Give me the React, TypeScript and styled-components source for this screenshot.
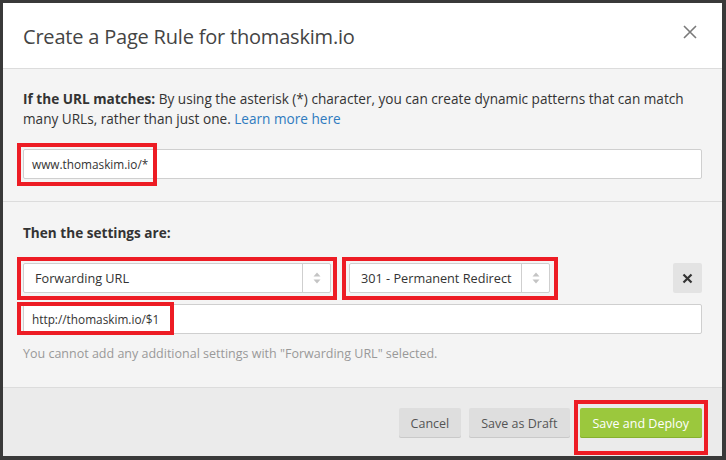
import React from "react";
import styled, { createGlobalStyle } from "styled-components";

const GlobalStyle = createGlobalStyle`
  html, body {
    margin: 0;
    padding: 0;
    background: #393939;
  }
  body {
    font-family: "Open Sans", "Liberation Sans", Arial, sans-serif;
    color: #333;
  }
  * {
    box-sizing: border-box;
  }
`;

const Page = styled.div`
  width: 726px;
  height: 460px;
  padding: 3px 4px 4px 3px;
  background: #393939;
`;

const Dialog = styled.div`
  width: 719px;
  height: 453px;
  display: flex;
  flex-direction: column;
  background: #f4f4f4;
  overflow: hidden;
`;

const Header = styled.div`
  height: 66px;
  flex: none;
  display: flex;
  align-items: center;
  justify-content: space-between;
  padding: 2px 24px 0 20px;
  background: #fff;
  border-bottom: 1px solid #dcdcdc;
`;

const Title = styled.h2`
  margin: 0;
  font-size: 20px;
  font-weight: 400;
  color: #444;
  letter-spacing: -0.2px;
`;

const CloseButton = styled.button`
  width: 14px;
  height: 14px;
  padding: 0;
  border: 0;
  background: none;
  display: flex;
  margin-top: -9px;
  margin-right: 1px;
  cursor: pointer;
`;

const Section = styled.div<{ $last?: boolean }>`
  padding: ${({ $last }) => ($last ? "21px 20px 24px" : "20px 20px 22px")};
  border-bottom: 1px solid #dcdcdc;
`;

const Text = styled.p`
  margin: 0 0 20px;
  font-size: 13.6px;
  line-height: 20px;
  color: #333;

  b {
    font-weight: 700;
  }

  a {
    color: #2f7bbf;
    text-decoration: none;
  }
`;

const Field = styled.div`
  position: relative;
`;

const Input = styled.div`
  height: 30px;
  display: flex;
  align-items: center;
  padding: 0 8px;
  background: #fff;
  border: 1px solid #cfcfcf;
  border-radius: 2px;
  font-size: 11.8px;
  color: #333;
`;

const Highlight = styled.span<{ $l: number; $t: number; $w: number; $h: number }>`
  position: absolute;
  left: ${({ $l }) => $l}px;
  top: ${({ $t }) => $t}px;
  width: ${({ $w }) => $w}px;
  height: ${({ $h }) => $h}px;
  border: 4px solid #ed1c24;
  pointer-events: none;
`;

const Row = styled.div`
  display: flex;
  align-items: center;
  margin-bottom: 11px;
`;

const Select = styled.div<{ $width: number; $gap?: number }>`
  position: relative;
  width: ${({ $width }) => $width}px;
  height: 30px;
  margin-right: ${({ $gap }) => $gap || 0}px;
  display: flex;
  background: #fff;
  border: 1px solid #cfcfcf;
  border-radius: 2px;
`;

const SelectLabel = styled.div`
  flex: 1;
  display: flex;
  align-items: center;
  padding-left: 11px;
  font-size: 12.7px;
  color: #333;
`;

const Arrows = styled.div`
  width: 28px;
  display: flex;
  align-items: center;
  justify-content: center;
  border-left: 1px solid #cfcfcf;
`;

const RemoveButton = styled.button`
  margin-left: auto;
  width: 29px;
  height: 30px;
  padding: 0;
  display: flex;
  align-items: center;
  justify-content: center;
  background: #e3e3e3;
  border: 0;
  border-radius: 2px;
`;

const Help = styled.p`
  margin: 11px 0 0;
  font-size: 12.5px;
  line-height: 18px;
  color: #999;
`;

const Footer = styled.div`
  flex: 1;
  display: flex;
  justify-content: flex-end;
  align-items: flex-start;
  gap: 8px;
  padding: 20px 20px 0;
  background: #ebebeb;
`;

const Button = styled.button<{ $primary?: boolean }>`
  position: relative;
  height: 30px;
  padding: 0 ${({ $primary }) => ($primary ? "13px" : "12px")};
  border: 0;
  border-radius: 2px;
  font-family: "Open Sans", "Liberation Sans", Arial, sans-serif;
  font-size: 12.5px;
  color: ${({ $primary }) => ($primary ? "#fff" : "#555")};
  background: ${({ $primary }) => ($primary ? "#9bc83d" : "#dedede")};
  box-shadow: inset 0 -1px 0 ${({ $primary }) => ($primary ? "#86b02e" : "#c9c9c9")};
  margin-left: ${({ $primary }) => ($primary ? "2px" : "0")};
`;

const UpDown = () => (
  <svg width="8" height="12" viewBox="0 0 8 12">
    <path d="M4 0.5 L7.5 4.5 H0.5 Z" fill="#c4c4c4" />
    <path d="M4 11.5 L7.5 7.5 H0.5 Z" fill="#c4c4c4" />
  </svg>
);

const App = () => {
  return (
    <Page>
      <GlobalStyle />
      <Dialog>
        <Header>
          <Title>Create a Page Rule for thomaskim.io</Title>
          <CloseButton aria-label="Close">
            <svg width="14" height="14" viewBox="0 0 14 14">
              <path d="M1 1 L13 13 M13 1 L1 13" stroke="#7a7a7a" strokeWidth="1.6" />
            </svg>
          </CloseButton>
        </Header>

        <Section>
          <Text>
            <b>If the URL matches:</b> By using the asterisk (*) character, you can create
            dynamic patterns that can match many URLs, rather than just one.{" "}
            <a href="#">Learn more here</a>
          </Text>
          <Field>
            <Input>www.thomaskim.io/*</Input>
            <Highlight $l={-6} $t={-6} $w={140} $h={43} />
          </Field>
        </Section>

        <Section $last>
          <Text>
            <b>Then the settings are:</b>
          </Text>
          <Row>
            <Select $width={308} $gap={18}>
              <SelectLabel>Forwarding URL</SelectLabel>
              <Arrows>
                <UpDown />
              </Arrows>
              <Highlight $l={-7} $t={-7} $w={320} $h={43} />
            </Select>
            <Select $width={201}>
              <SelectLabel>301 - Permanent Redirect</SelectLabel>
              <Arrows>
                <UpDown />
              </Arrows>
              <Highlight $l={-8} $t={-7} $w={216} $h={43} />
            </Select>
            <RemoveButton aria-label="Remove">
              <svg width="11" height="11" viewBox="0 0 11 11">
                <path d="M1.5 1.5 L9.5 9.5 M9.5 1.5 L1.5 9.5" stroke="#333" strokeWidth="2.2" />
              </svg>
            </RemoveButton>
          </Row>
          <Field>
            <Input>http://thomaskim.io/$1</Input>
            <Highlight $l={-6} $t={-2} $w={157} $h={33} />
          </Field>
          <Help>You cannot add any additional settings with "Forwarding URL" selected.</Help>
        </Section>

        <Footer>
          <Button>Cancel</Button>
          <Button>Save as Draft</Button>
          <Button $primary>
            Save and Deploy
            <Highlight $l={-6} $t={-8} $w={134} $h={55} />
          </Button>
        </Footer>
      </Dialog>
    </Page>
  );
};

export default App;
